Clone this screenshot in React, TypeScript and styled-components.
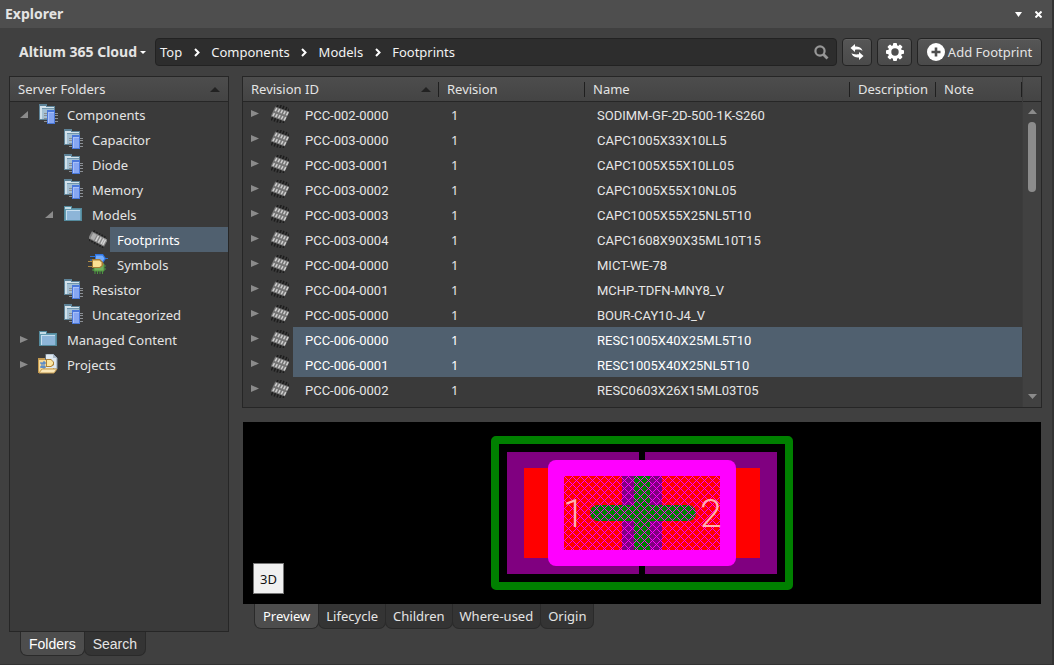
import React from "react";
import styled, { createGlobalStyle, css } from "styled-components";

const uiFont = '"Noto Sans", "Open Sans", sans-serif';
const dataFont = 'Roboto, "Liberation Sans", sans-serif';

const c = {
  window: "#404040",
  title: "#4e4e4e",
  panel: "#3a3a3a",
  line: "#262626",
  field: "#2d2d2d",
  text: "#e4e4e4",
  selection: "#50606f",
  arrow: "#8b8b8b",
};

const GlobalStyle = createGlobalStyle`
  * { box-sizing: border-box; }
  body { margin: 0; background: ${c.window}; color: ${c.text}; font: 13px/18px ${uiFont}; }
  button { font: inherit; color: inherit; border: 0; padding: 0; background: none; cursor: pointer; }
  svg { display: block; flex: none; }
`;

const Window = styled.div`
  display: flex;
  flex-direction: column;
  height: 100vh;
  min-height: 480px;
  border-right: 2px solid #333;
  border-bottom: 1px solid #333;
`;

const TitleBar = styled.header`
  display: flex;
  align-items: center;
  flex: none;
  height: 28px;
  padding: 0 4px 0 5px;
  background: ${c.title};
`;

const Title = styled.h1`
  flex: 1;
  margin: 0;
  font-size: 14px;
  font-weight: 700;
`;

const TitleButton = styled.button`
  display: grid;
  place-items: center;
  width: 20px;
  height: 20px;
  color: #fff;
`;

const Toolbar = styled.div`
  display: flex;
  align-items: center;
  flex: none;
  gap: 5px;
  padding: 10px 10px 0 9px;
`;

const ServerButton = styled.button`
  display: flex;
  align-items: center;
  gap: 3px;
  width: 141px;
  padding-left: 10px;
  font-size: 14px;
  font-weight: 700;
  white-space: nowrap;
`;

const PathField = styled.nav`
  display: flex;
  align-items: center;
  flex: 1;
  min-width: 0;
  height: 28px;
  padding: 0 7px 0 4px;
  border: 1px solid #222;
  border-radius: 4px;
  background: ${c.field};
`;

const PathLink = styled.a`
  color: #f2f2f2;
  text-decoration: none;
`;

const PathArrow = styled.span`
  display: grid;
  place-items: center;
  width: 29px;
`;

const SearchButton = styled.button`
  margin-left: auto;
`;

const ToolButton = styled.button<{ $width: number }>`
  display: flex;
  align-items: center;
  justify-content: center;
  gap: 3px;
  min-width: ${(p) => p.$width}px;
  height: 28px;
  border: 1px solid #242424;
  border-radius: 4px;
  background: linear-gradient(#565656, #4a4a4a);
  box-shadow: inset 0 1px #606060;
  white-space: nowrap;
`;

const Workspace = styled.main`
  display: flex;
  flex: 1;
  gap: 13px;
  min-height: 0;
  padding: 10px 10px 0 9px;
`;

const Sidebar = styled.section`
  display: flex;
  flex-direction: column;
  flex: 0 0 220px;
  padding-bottom: 8px;
`;

const Content = styled.section`
  display: flex;
  flex-direction: column;
  flex: 1;
  min-width: 0;
  padding-bottom: 35px;
`;

const panelFrame = css`
  border: 1px solid ${c.line};
  background: ${c.panel};
`;

const headerFill = css`
  height: 25px;
  border-bottom: 1px solid ${c.line};
  background: linear-gradient(#4d4d4d, #444);
`;

const FolderPanel = styled.div`
  flex: 1;
  min-height: 0;
  overflow: hidden;
  ${panelFrame}
`;

const FolderHeader = styled.h2`
  ${headerFill}
  display: flex;
  align-items: center;
  justify-content: space-between;
  margin: 0;
  padding: 0 8px;
  font-size: 13px;
  font-weight: 400;
`;

const Tree = styled.ul`
  margin: 0;
  padding: 0;
  list-style: none;
`;

const TreeRow = styled.li<{ $level: number }>`
  display: flex;
  align-items: center;
  height: 25px;
  padding-left: ${(p) => p.$level * 25 + 8}px;
`;

const ExpandSlot = styled.span`
  flex: none;
  width: 20px;
`;

const IconSlot = styled.span<{ $inset: boolean }>`
  flex: none;
  width: 22px;
  padding: 0 0 2px ${(p) => (p.$inset ? 1 : 0)}px;
`;

const Expander = styled.button`
  display: grid;
  place-items: center;
  width: 11px;
  height: 25px;
`;

const TreeLabel = styled.button<{ $selected?: boolean }>`
  flex: 1;
  height: 25px;
  padding-left: 7px;
  text-align: left;
  background: ${(p) => (p.$selected ? c.selection : "none")};
  color: ${(p) => (p.$selected ? "#fff" : "inherit")};
`;

const TabStrip = styled.div<{ $classic?: boolean }>`
  display: flex;
  flex: none;
  height: ${(p) => (p.$classic ? 24 : 25)}px;
  padding-left: ${(p) => (p.$classic ? 11 : 12)}px;
  font-size: ${(p) => (p.$classic ? 14 : 13)}px;
  font-family: ${(p) => (p.$classic ? '"Liberation Sans", sans-serif' : "inherit")};
`;

const Tab = styled.button<{ $active?: boolean; $wide?: boolean }>`
  margin-right: -1px;
  padding: 0 ${(p) => (p.$active || p.$wide ? 8 : 7)}px;
  border: 1px solid #2a2a2a;
  border-top: 0;
  border-radius: 0 0 7px 7px;
  background: ${(p) => (p.$active ? "#4d4d4d" : "#343434")};
  color: ${(p) => (p.$active ? "#fff" : c.text)};
`;

const ListPanel = styled.div`
  display: flex;
  flex: 1;
  min-height: 0;
  ${panelFrame}
`;

const ListArea = styled.div`
  flex: 1;
  min-width: 0;
  overflow: hidden;
`;

const ListTable = styled.table`
  width: 100%;
  table-layout: fixed;
  border-collapse: separate;
  border-spacing: 0;
`;

const Col = styled.col<{ $width?: number }>`
  width: ${(p) => (p.$width ? p.$width + "px" : "auto")};
`;

const HeadCell = styled.th`
  ${headerFill}
  padding: 0;
  font-weight: 400;
  text-align: left;
`;

const HeadLabel = styled.div`
  display: flex;
  align-items: center;
  justify-content: space-between;
  height: 15px;
  padding: 0 7px 0 8px;
  border-right: 1px solid #1f1f1f;
  white-space: nowrap;
`;

const ItemCell = styled.td<{ $selected: boolean }>`
  height: 25px;
  padding: 2px 0 0 12px;
  background: ${(p) => (p.$selected ? c.selection : "none")};
  color: ${(p) => (p.$selected ? "#fff" : "#e6e6e6")};
  font-family: ${dataFont};
  white-space: nowrap;
`;

const RevisionCell = styled(ItemCell)`
  padding-top: 0;
  font-family: ${uiFont};
`;

const LeadCell = styled(ItemCell)`
  padding: 0;
  background: none;
`;

const Lead = styled.div`
  display: flex;
  height: 25px;
`;

const LeadIcons = styled.div`
  display: flex;
  align-items: center;
  gap: 11px;
  flex: none;
  width: 50px;
  padding: 0 0 2px 6px;
`;

const LeadLabel = styled.div<{ $selected: boolean }>`
  flex: 1;
  padding: 2px 0 0 12px;
  line-height: 23px;
  background: ${(p) => (p.$selected ? c.selection : "none")};
`;

const ScrollColumn = styled.div`
  display: flex;
  flex-direction: column;
  flex: none;
  width: 19px;
  border-left: 1px solid #3c3c3c;
  background: #414141;
`;

const ScrollCap = styled.div`
  ${headerFill}
`;

const ScrollTrack = styled.div`
  display: flex;
  flex-direction: column;
  align-items: center;
  flex: 1;
  padding-bottom: 2px;
`;

const ScrollStep = styled.button`
  display: grid;
  place-items: center;
  width: 18px;
  height: 18px;
`;

const ScrollThumb = styled.div`
  width: 8px;
  height: 70px;
  margin: 2px 0 auto;
  border-radius: 4px;
  background: #8c8c8c;
`;

const Preview = styled.div`
  position: relative;
  display: grid;
  place-items: center;
  flex: 0 0 182px;
  margin: 14px 1px 0;
  background: #000;
`;

const ModeButton = styled.button`
  position: absolute;
  left: 10px;
  bottom: 10px;
  width: 31px;
  height: 31px;
  border: 1px solid #777;
  background: #f0f0f0;
  color: #111;
`;

const TriangleDown = ({ size = 7, color = "#fff" }) => (
  <svg width={size} height="5" viewBox="0 0 8 5" preserveAspectRatio="none" fill={color}>
    <path d="M0 0h8L4 5z" />
  </svg>
);

const CaretDown = () => (
  <svg width="6" height="3" viewBox="0 0 6 3" fill="#fff">
    <path d="M0 0h6L3 3z" />
  </svg>
);

const SortArrow = () => (
  <svg width="10" height="5" viewBox="0 0 10 5" fill="#222">
    <path d="M5 0l5 5H0z" />
  </svg>
);

const ClosedArrow = () => (
  <svg width="9" height="9" viewBox="0 0 9 9" fill={c.arrow}>
    <path d="M1 1l8 3.500L1 8z" />
  </svg>
);

const OpenArrow = () => (
  <svg width="9" height="9" viewBox="0 0 9 9" fill={c.arrow}>
    <path d="M9 1v7H1z" />
  </svg>
);

const Chevron = () => (
  <svg width="6" height="9" viewBox="0 0 6 9" fill="none" stroke="#fff" strokeWidth="2">
    <path d="M1 1l3.500 3.500L1 8" />
  </svg>
);

const CloseIcon = () => (
  <svg width="7" height="7" viewBox="0 0 7 7" stroke="#fff" strokeWidth="2">
    <path d="M.5.5l6 6M6.500.5l-6 6" />
  </svg>
);

const SearchIcon = () => (
  <svg width="15" height="15" viewBox="0 0 15 15" fill="none" stroke="#979797">
    <circle cx="6" cy="6" r="4.600" strokeWidth="2.200" />
    <path d="M9.500 9.500l4 4" strokeWidth="2.800" />
  </svg>
);

const RefreshIcon = () => (
  <svg width="14" height="16" viewBox="0 0 14 16" fill="#fff">
    <path d="M5 0v2.500c4 0 6.500 1 7.500 4.500C11 5.500 8.500 5.500 5 5.700V8L0.500 4z" />
    <path d="M9 16v-2.500c-4 0-6.500-1-7.500-4.500 1.500 1.500 4 1.500 7.500 1.300V8l4.500 4z" />
  </svg>
);

const GearIcon = () => (
  <svg width="18" height="18" viewBox="0 0 18 18">
    <g fill="#fff">
      {[0, 45, 90, 135].map((angle) => (
        <rect key={angle} x="7" y="0" width="4" height="18" rx="1" transform={`rotate(${angle} 9 9)`} />
      ))}
      <circle cx="9" cy="9" r="7" />
    </g>
    <circle cx="9" cy="9" r="3.700" fill="#4f4f4f" />
  </svg>
);

const AddIcon = () => (
  <svg width="18" height="18" viewBox="0 0 18 18">
    <circle cx="9" cy="9" r="9" fill="#fff" />
    <path d="M9 4.500v9M4.500 9h9" stroke="#4f4f4f" strokeWidth="2.600" />
  </svg>
);

const ComponentFolderIcon = () => (
  <svg width="19" height="20" viewBox="0 0 19 20" shapeRendering="crispEdges">
    <path d="M0 0h8v2h8v14H0z" fill="#5d8398" />
    <path d="M1 2h6v1h8v1H1z" fill="#d5e3ec" />
    <path d="M1 4h2v11H1z" fill="#cfe0ea" />
    <path d="M3 4h12v11H3z" fill="#a3bfd2" />
    <path d="M3 4h12v1H3z" fill="#7097ad" />
    <path d="M5 9h3v1H5zM5 11h3v1H5zM5 14h3v1H5zM5 17h3v1H5zM16 9h3v1h-3zM16 11h3v1h-3zM16 14h3v1h-3zM16 17h3v1h-3z" fill="#8b8f93" />
    <path d="M8 6h8v14H8z" fill="#4a78da" />
    <path d="M9 8h6v11H9z" fill="#a9c0f8" />
    <path d="M10 9h5v10h-5z" fill="#86a6f2" />
  </svg>
);

const FolderIcon = () => (
  <svg width="18" height="15" viewBox="0 0 18 15" shapeRendering="crispEdges">
    <path d="M0 0h8v2h10v13H0z" fill="#548a9d" />
    <path d="M1 1h6v2H1z" fill="#c4dce6" />
    <path d="M1 3h16v11H1z" fill="#639bb0" />
    <path d="M2 4h14v10H2z" fill="#c7dff0" />
    <path d="M3 5h13v9H3z" fill="#8db5d8" />
  </svg>
);

const FootprintIcon = () => (
  <svg width="18" height="18" viewBox="0 0 18 18">
    <g transform="rotate(20 9 9)">
      <path d="M4 0l-1 18M7 0l-1 18M10 0l-1 18M13 0l-1 18M16 0l-1 18" stroke="#1c1c1c" strokeWidth="1.400" />
      <path d="M2 3.500h15l-1 11h-15z" fill="#757575" />
      <path d="M4 4.500l-.5 3.500M7 4.500l-.5 3.500M10 4.500l-.5 3.500M13 4.500l-.5 3.500M16 4.500l-.5 3.500M3.500 10l-.5 3.500M6.500 10l-.5 3.500M9.500 10l-.5 3.500M12.500 10l-.5 3.500M15.500 10l-.5 3.500" stroke="#cfcfcf" strokeWidth="1.500" />
    </g>
  </svg>
);

const FootprintFolderIcon = () => (
  <svg width="18" height="18" viewBox="0 0 18 18">
    <g transform="rotate(28 9 9)">
      <path d="M2 3v12M5 3v12M8 3v12M11 3v12M14 3v12M17 3v12" stroke="#202020" strokeWidth="1.500" />
      <rect x="0" y="5" width="18" height="8" fill="#858585" />
      <rect x="2" y="6" width="4" height="6" fill="#b0b0b0" />
      <path d="M8 6v6M11 6v6M14 6v6M16 6v6" stroke="#d2d2d2" strokeWidth="1.600" />
    </g>
  </svg>
);

const SymbolIcon = () => (
  <svg width="20" height="20" viewBox="0 0 20 20">
    <path d="M2 2.500h5M2 6h4M15 4.500h5" stroke="#2d74d8" />
    <path d="M7 0h8l3 4.500L15 9H7z" fill="#2d74e4" />
    <path d="M8 1.500h6.500l2 3-2 3H8z" fill="#74acfb" />
    <path d="M6 10h10v7H6zM7 17v3M9.500 17v3M12 17v3M14.500 17v3M16 12h2M16 15h2M4 13h2M4 16h2" fill="#72ad5b" stroke="#4c9440" />
    <path d="M0 7.500h5M0 12.500h5M14 10h2" stroke="#b08b45" />
    <path d="M4 5h8l3 3v4l-3 2H4z" fill="#a67c36" />
    <path d="M5 6.500h6.500l2 2v3L11.500 13H5z" fill="#fbe094" />
  </svg>
);

const ProjectIcon = () => (
  <svg width="20" height="20" viewBox="0 0 20 20">
    <path d="M8 0h7l4 4v11H8z" fill="#dfe8f0" stroke="#8fa1b2" />
    <path d="M0 4h7v2h9v13H0z" fill="#c49a50" />
    <path d="M1 6h14v12H1z" fill="#f4d795" />
    <path d="M8 1h7l3 4v9H8z" fill="#dfe8f0" />
    <path d="M15 0v4h4z" fill="#aebccb" />
    <path d="M2 9h6M2 13h6M4 9v5M6 7v8" stroke="#2d74d8" />
    <path d="M8 5h5l3 3v3l-3 2H8z" fill="#ad8138" />
    <path d="M9 6h4l2 2v2l-2 2H9z" fill="#fde6a0" />
    <path d="M1 19l3-4h15l-3 4z" fill="#fbe8b8" stroke="#c49a50" />
  </svg>
);

const hatchSize = 8;
const hatchSteps = Array.from({ length: hatchSize }, (_, i) => i);

const FootprintDrawing = () => (
  <svg width="302" height="154" viewBox="0 0 302 154" role="img" aria-label="Footprint preview">
    <defs>
      <pattern id="hatch" width={hatchSize} height={hatchSize} patternUnits="userSpaceOnUse" x="73" y="40">
        <g fill="#f0f" shapeRendering="crispEdges">
          {hatchSteps.map((i) => (
            <React.Fragment key={i}>
              <rect x={i} y={i} width="1" height="1" />
              <rect x={(hatchSize - i) % hatchSize} y={i} width="1" height="1" />
            </React.Fragment>
          ))}
        </g>
      </pattern>
    </defs>
    <rect x="4" y="4" width="294" height="146" rx="1" fill="none" stroke="#008000" strokeWidth="8" strokeLinejoin="round" />
    <path d="M16 16h132v122H16zM154 16h132v122H154z" fill="#800080" />
    <path d="M33 32h236v90H33z" fill="#f00" />
    <rect x="57" y="24" width="188" height="106" rx="8" fill="#f0f" />
    <path d="M73 40h156v74H73z" fill="#f00" />
    <path d="M131 40h40v74h-40z" fill="#800080" />
    <path d="M143 40h16v74h-16z" fill="#008000" />
    <rect x="99" y="69" width="106" height="16" rx="8" fill="#008000" />
    <path d="M73 40h156v74H73z" fill="url(#hatch)" />
    <g fill="#ffb0b0" fontFamily="Roboto, sans-serif" fontWeight="300" fontSize="39">
      <text x="72" y="91">1</text>
      <text x="209" y="91">2</text>
    </g>
  </svg>
);

type IconKind = "components" | "folder" | "footprint" | "symbol" | "project";

const treeIcons: Record<IconKind, () => React.JSX.Element> = {
  components: ComponentFolderIcon,
  folder: FolderIcon,
  footprint: FootprintFolderIcon,
  symbol: SymbolIcon,
  project: ProjectIcon,
};

const fullWidthIcons: IconKind[] = ["symbol", "project"];

const folders: { name: string; level: number; icon: IconKind; open?: boolean; selected?: boolean }[] = [
  { name: "Components", level: 0, icon: "components", open: true },
  { name: "Capacitor", level: 1, icon: "components" },
  { name: "Diode", level: 1, icon: "components" },
  { name: "Memory", level: 1, icon: "components" },
  { name: "Models", level: 1, icon: "folder", open: true },
  { name: "Footprints", level: 2, icon: "footprint", selected: true },
  { name: "Symbols", level: 2, icon: "symbol" },
  { name: "Resistor", level: 1, icon: "components" },
  { name: "Uncategorized", level: 1, icon: "components" },
  { name: "Managed Content", level: 0, icon: "folder", open: false },
  { name: "Projects", level: 0, icon: "project", open: false },
];

const items: { id: string; name: string; selected?: boolean }[] = [
  { id: "PCC-002-0000", name: "SODIMM-GF-2D-500-1K-S260" },
  { id: "PCC-003-0000", name: "CAPC1005X33X10LL5" },
  { id: "PCC-003-0001", name: "CAPC1005X55X10LL05" },
  { id: "PCC-003-0002", name: "CAPC1005X55X10NL05" },
  { id: "PCC-003-0003", name: "CAPC1005X55X25NL5T10" },
  { id: "PCC-003-0004", name: "CAPC1608X90X35ML10T15" },
  { id: "PCC-004-0000", name: "MICT-WE-78" },
  { id: "PCC-004-0001", name: "MCHP-TDFN-MNY8_V" },
  { id: "PCC-005-0000", name: "BOUR-CAY10-J4_V" },
  { id: "PCC-006-0000", name: "RESC1005X40X25ML5T10", selected: true },
  { id: "PCC-006-0001", name: "RESC1005X40X25NL5T10", selected: true },
  { id: "PCC-006-0002", name: "RESC0603X26X15ML03T05" },
];

const path = ["Top", "Components", "Models", "Footprints"];
const columns = ["Revision ID", "Revision", "Name", "Description", "Note"];
const previewTabs = ["Preview", "Lifecycle", "Children", "Where-used", "Origin"];

export default function App() {
  return (
    <Window>
      <GlobalStyle />
      <TitleBar>
        <Title>Explorer</Title>
        <TitleButton aria-label="Panel menu"><TriangleDown /></TitleButton>
        <TitleButton aria-label="Close"><CloseIcon /></TitleButton>
      </TitleBar>

      <Toolbar>
        <ServerButton>
          Altium 365 Cloud
          <CaretDown />
        </ServerButton>
        <PathField aria-label="Path">
          {path.map((part, i) => (
            <React.Fragment key={part}>
              {i > 0 && <PathArrow><Chevron /></PathArrow>}
              <PathLink href="#">{part}</PathLink>
            </React.Fragment>
          ))}
          <SearchButton aria-label="Search path"><SearchIcon /></SearchButton>
        </PathField>
        <ToolButton $width={30} aria-label="Refresh"><RefreshIcon /></ToolButton>
        <ToolButton $width={35} aria-label="Settings"><GearIcon /></ToolButton>
        <ToolButton $width={125}><AddIcon />Add Footprint</ToolButton>
      </Toolbar>

      <Workspace>
        <Sidebar>
          <FolderPanel>
            <FolderHeader>Server Folders<SortArrow /></FolderHeader>
            <Tree>
              {folders.map((f) => {
                const Icon = treeIcons[f.icon];
                return (
                  <TreeRow key={f.name} $level={f.level}>
                    <ExpandSlot>
                      {f.open !== undefined && (
                        <Expander aria-label={`Toggle ${f.name}`} aria-expanded={f.open}>
                          {f.open ? <OpenArrow /> : <ClosedArrow />}
                        </Expander>
                      )}
                    </ExpandSlot>
                    <IconSlot $inset={!fullWidthIcons.includes(f.icon)}><Icon /></IconSlot>
                    <TreeLabel $selected={f.selected}>{f.name}</TreeLabel>
                  </TreeRow>
                );
              })}
            </Tree>
          </FolderPanel>
          <TabStrip $classic>
            <Tab $active>Folders</Tab>
            <Tab $wide>Search</Tab>
          </TabStrip>
        </Sidebar>

        <Content>
          <ListPanel>
            <ListArea>
              <ListTable>
                <colgroup>
                  <Col $width={196} />
                  <Col $width={146} />
                  <Col />
                  <Col $width={86} />
                  <Col $width={86} />
                </colgroup>
                <thead>
                  <tr>
                    {columns.map((name, i) => (
                      <HeadCell key={name} scope="col">
                        <HeadLabel>{name}{i === 0 && <SortArrow />}</HeadLabel>
                      </HeadCell>
                    ))}
                  </tr>
                </thead>
                <tbody>
                  {items.map((item) => {
                    const selected = !!item.selected;
                    return (
                      <tr key={item.id}>
                        <LeadCell $selected={selected}>
                          <Lead>
                            <LeadIcons>
                              <Expander aria-label={`Expand ${item.id}`}><ClosedArrow /></Expander>
                              <FootprintIcon />
                            </LeadIcons>
                            <LeadLabel $selected={selected}>{item.id}</LeadLabel>
                          </Lead>
                        </LeadCell>
                        <RevisionCell $selected={selected}>1</RevisionCell>
                        <ItemCell $selected={selected}>{item.name}</ItemCell>
                        <ItemCell $selected={selected} />
                        <ItemCell $selected={selected} />
                      </tr>
                    );
                  })}
                </tbody>
              </ListTable>
            </ListArea>
            <ScrollColumn>
              <ScrollCap />
              <ScrollTrack>
                <ScrollStep aria-label="Scroll up">
                  <svg width="9" height="5" viewBox="0 0 9 5" fill={c.arrow}><path d="M4.500 0L9 5H0z" /></svg>
                </ScrollStep>
                <ScrollThumb />
                <ScrollStep aria-label="Scroll down"><TriangleDown size={9} color={c.arrow} /></ScrollStep>
              </ScrollTrack>
            </ScrollColumn>
          </ListPanel>
          <Preview>
            <FootprintDrawing />
            <ModeButton>3D</ModeButton>
          </Preview>
          <TabStrip>
            {previewTabs.map((name, i) => (
              <Tab key={name} $active={i === 0}>{name}</Tab>
            ))}
          </TabStrip>
        </Content>
      </Workspace>
    </Window>
  );
}
